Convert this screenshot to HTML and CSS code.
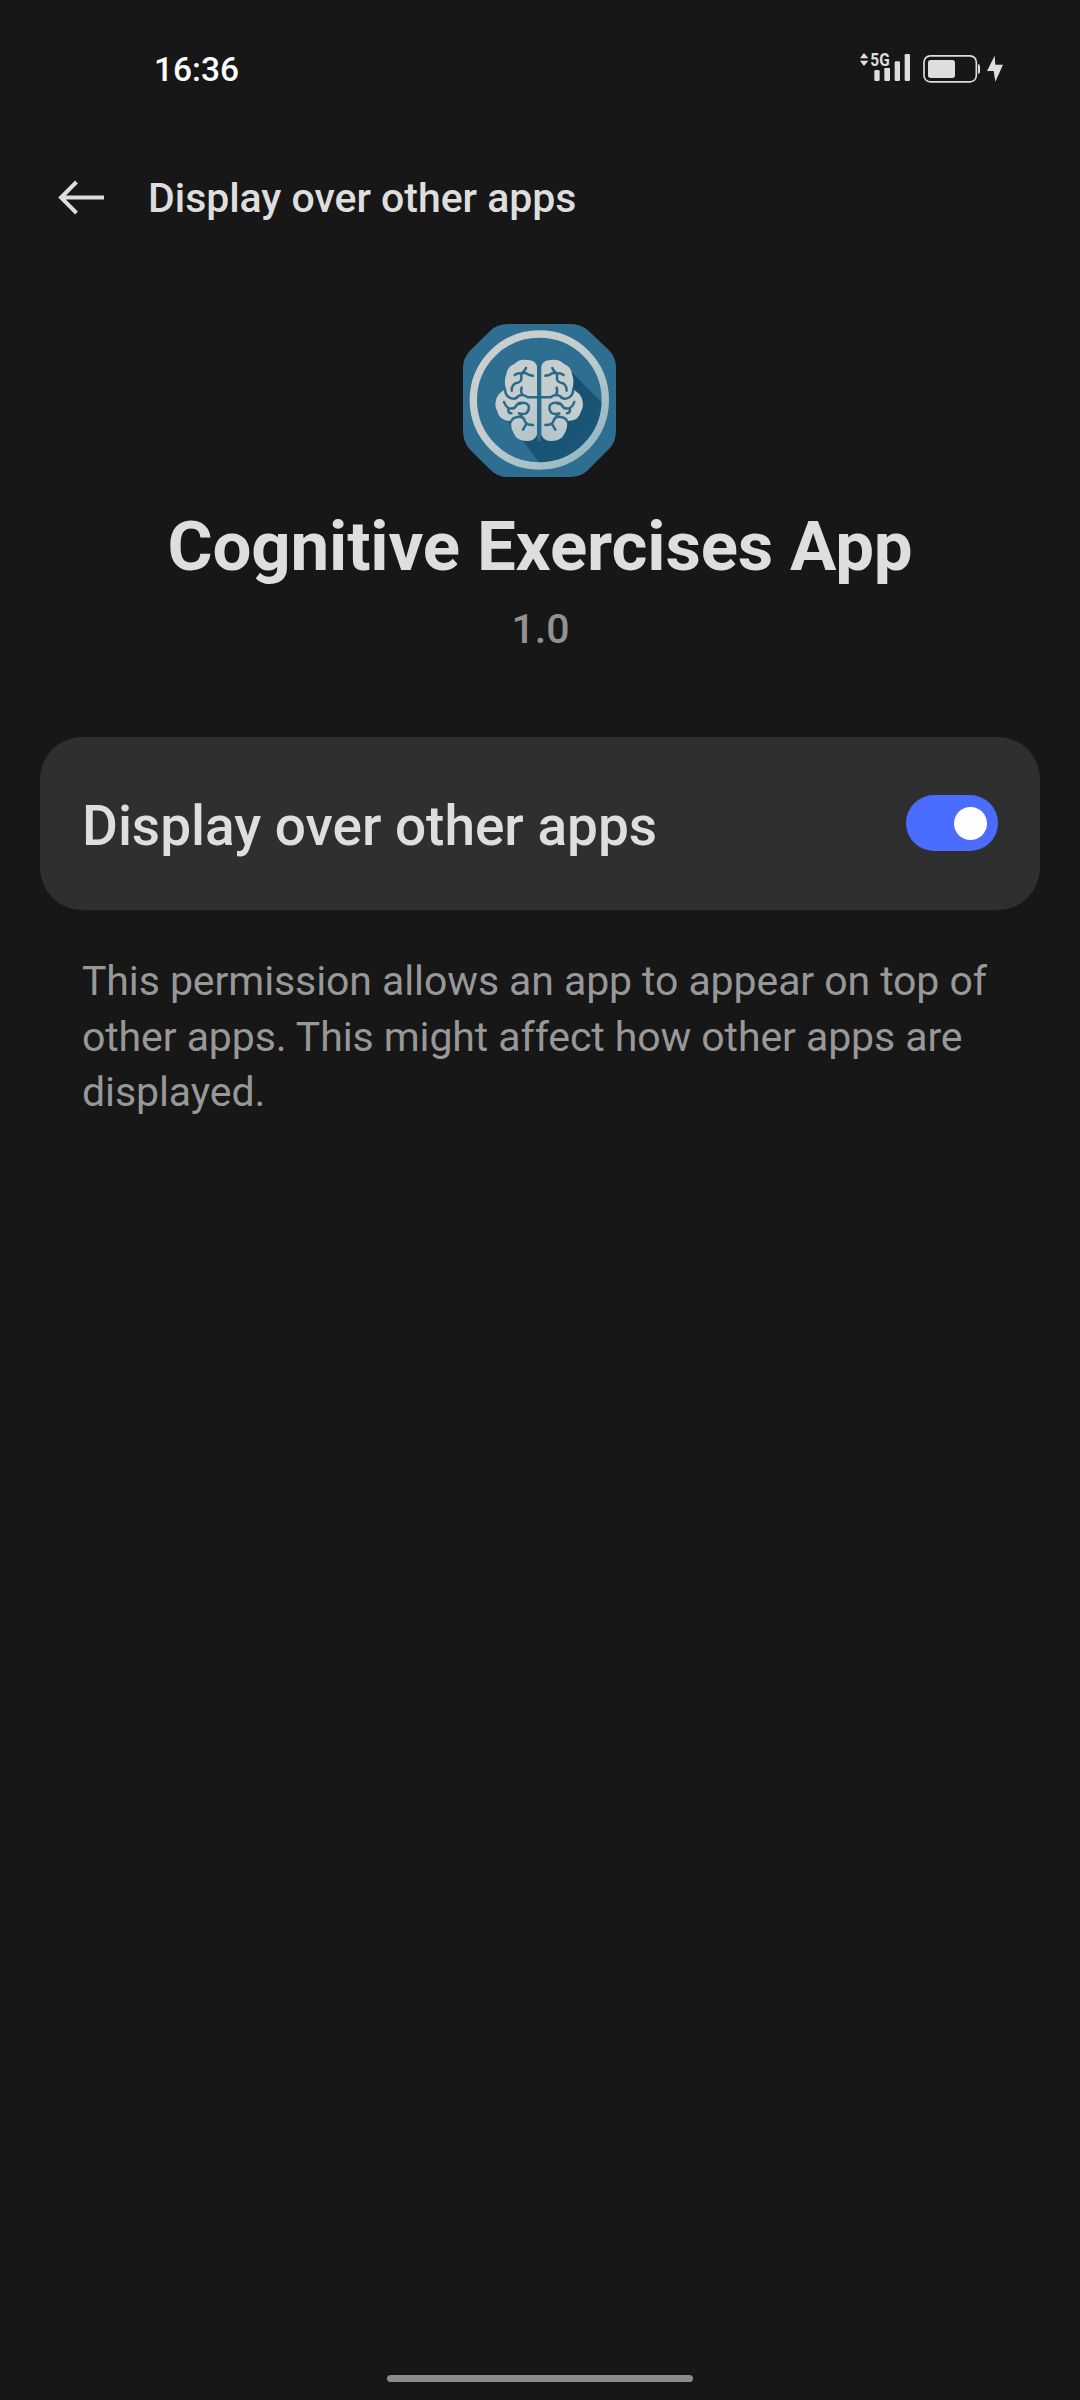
FILE: index.html
```html
<!DOCTYPE html>
<html lang="en">
<head>
<meta charset="utf-8">
<title>Display over other apps</title>
<link rel="stylesheet" href="styles.css">
</head>
<body>
<div class="status-bar">
  <span class="clock">16:36</span>
  <svg class="status-icons" viewBox="0 0 540 180" aria-hidden="true">
    <g fill="#dedede">
      <path d="M60 55 70 41Q72 39 74 41L85 55ZM60 62H85L74 76Q72 78 70 76Z"/>
      <text class="network" x="91" y="79" textLength="58" lengthAdjust="spacingAndGlyphs">5G</text>
      <rect x="103" y="90" width="16" height="33" rx="4"/>
      <path d="M133 84H150V119Q150 123 146 123H137Q133 123 133 119Z"/>
      <rect x="164" y="64" width="16" height="59" rx="4"/>
      <rect x="194" y="42" width="16" height="81" rx="4"/>
      <rect x="264" y="60" width="81" height="54" rx="8"/>
      <path d="M414 72Q420 73 420 79V95Q420 101 414 102Z"/>
      <path d="M464 47 441 93H461L466 125 489 74H466Z"/>
    </g>
    <rect x="252" y="47.500" width="157" height="78" rx="19" fill="none" stroke="#dedede" stroke-width="5"/>
  </svg>
</div>
<header class="toolbar">
  <svg class="back" viewBox="0 0 46 36" aria-hidden="true"><path d="M46 17.500H3M18.500 2 3 17.500 18.500 33" fill="none" stroke="#dedede" stroke-width="3.900"/></svg>
  <span class="toolbar-title">Display over other apps</span>
</header>
<main>
  <section class="app">
    <svg class="app-icon" viewBox="39 42 459 459" aria-hidden="true">
      <defs>
        <linearGradient id="pale" gradientUnits="userSpaceOnUse" x1="110" y1="100" x2="430" y2="440">
          <stop offset="0" stop-color="#c9cfcd"/><stop offset=".45" stop-color="#c3cdcf"/><stop offset="1" stop-color="#92b6c4"/>
        </linearGradient>
        <linearGradient id="shade" gradientUnits="userSpaceOnUse" x1="280" y1="280" x2="390" y2="400">
          <stop offset="0" stop-color="#164f70"/><stop offset="1" stop-color="#1b5678"/>
        </linearGradient>
        <clipPath id="disc"><circle cx="268" cy="270" r="190"/></clipPath>
        <path id="lobe" d="M261 168Q255 150 234 150Q207 146 193 162Q172 169 169 193Q161 212 168 238Q140 249 137 276Q134 292 142 304Q148 334 184 333Q181 353 191 370Q201 394 232 393Q253 393 261 374Z"/>
        <g id="folds">
          <path d="M194 195Q205 187 214 191Q225 183 228 174M216 190Q228 187 235 194L249 197M214 192V207Q213 217 196 220Q184 229 185 242"/>
          <path d="M165 237Q166 260 184 265Q197 269 205 258Q220 250 233 262H268M217 254Q211 243 215 233"/>
          <path d="M162 276Q166 289 176 295Q194 298 198 288Q203 278 214 278M176 295Q172 309 184 310M209 282Q224 273 235 285Q240 299 230 309Q218 315 207 310M216 311Q214 321 202 321Q187 323 183 335M203 321Q219 317 224 331Q226 345 249 345M228 344 219 359"/>
        </g>
      </defs>
      <path fill="#2e6e90" d="M174 42H362Q394 42 416 63L477 121Q498 142 498 174V362Q498 396 476 418L414 480Q394 501 360 501H174Q142 501 121 479L61 420Q39 397 39 362V174Q39 143 60 122L121 62Q142 42 174 42Z"/>
      <path clip-path="url(#disc)" fill="url(#shade)" d="M365 187 500 322V501H300L174 333Z"/>
      <circle cx="268" cy="270" r="198" fill="none" stroke="url(#pale)" stroke-width="22"/>
      <g fill="url(#pale)"><use href="#lobe"/><use href="#lobe" transform="matrix(-1 0 0 1 535 0)"/></g>
      <path fill="#2b6988" d="M261 150H273V394H261Z"/>
      <g fill="none" stroke="#2b6988" stroke-width="7.500" stroke-linecap="round" stroke-linejoin="round"><use href="#folds"/><use href="#folds" transform="matrix(-1 0 0 1 535 0)"/></g>
    </svg>
    <h1>Cognitive Exercises App</h1>
    <p class="version">1.0</p>
  </section>
  <div class="card">
    <span class="card-label">Display over other apps</span>
    <span class="switch" role="switch" aria-checked="true"><span class="knob"></span></span>
  </div>
  <p class="description">This permission allows an app to appear on top of other apps. This might affect how other apps are displayed.</p>
</main>
<div class="home-indicator"></div>
</body>
</html>
```
FILE: styles.css
```css
* { box-sizing: border-box; }
body {
  margin: 0;
  width: 1080px;
  height: 2400px;
  display: flex;
  flex-direction: column;
  background: #171717;
  color: #dedede;
  font-family: Roboto, sans-serif;
}
h1, p { margin: 0; }
.status-bar {
  height: 138px;
  display: flex;
  justify-content: space-between;
  align-items: center;
  padding: 2px 60px 0 154px;
}
.clock { font-size: 33.5px; line-height: 40px; font-weight: 500; color: #fff; }
.status-icons { width: 180px; height: 60px; }
.network { font: 700 53px Roboto, sans-serif; }
.toolbar {
  height: 120px;
  display: flex;
  align-items: center;
  gap: 44px;
  padding-left: 58px;
}
.back { width: 46px; height: 36px; }
.toolbar-title { font-size: 41px; line-height: 50px; font-weight: 500; letter-spacing: -.04px; }
main { flex: 1; padding: 66px 40px 0; }
.app { display: flex; flex-direction: column; align-items: center; }
.app-icon { width: 153px; height: 153px; margin-right: 1px; }
h1 { margin-top: 30px; font-size: 69px; line-height: 80px; font-weight: 700; letter-spacing: -.15px; white-space: nowrap; }
.version { margin-top: 17px; padding-left: 1px; font-size: 41px; line-height: 50px; font-weight: 500; color: #929292; }
.card {
  margin-top: 83px;
  height: 173px;
  display: flex;
  align-items: center;
  justify-content: space-between;
  padding: 0 42px;
  border-radius: 42px;
  background: #2f2f2f;
}
.card-label { padding-top: 5px; font-size: 55px; line-height: 64px; font-weight: 500; letter-spacing: -.03px; }
.switch {
  width: 92px;
  height: 56px;
  display: flex;
  align-items: center;
  justify-content: flex-end;
  margin-bottom: 1px;
  padding-right: 11px;
  border-radius: 28px;
  background: #4a6cff;
}
.knob { width: 33px; height: 33px; border-radius: 50%; background: #fff; }
.description {
  margin-top: 44px;
  padding: 0 42px;
  font-size: 41px;
  line-height: 55.5px;
  letter-spacing: -.09px;
  color: #989898;
}
.home-indicator {
  width: 306px;
  height: 7px;
  margin: 0 auto 18px;
  border-radius: 4px;
  background: #8c8c8c;
}
```
